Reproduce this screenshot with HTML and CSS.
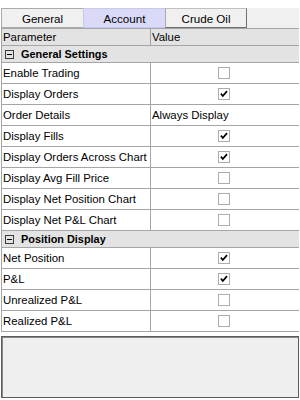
FILE: index.html
```html
<!DOCTYPE html>
<html>
<head>
<meta charset="utf-8">
<link rel="stylesheet" href="styles.css">
</head>
<body>
<div class="app">
  <div class="tabs">
    <div class="tab">General</div>
    <div class="tab active">Account</div>
    <div class="tab last">Crude Oil</div>
  </div>
  <div class="grid">
    <div class="row head"><div class="name">Parameter</div><div class="val">Value</div></div>
    <div class="row group"><span class="minus"></span><span class="gtitle">General Settings</span></div>
    <div class="row"><div class="name">Enable Trading</div><div class="val c"><span class="cb"></span></div></div>
    <div class="row"><div class="name">Display Orders</div><div class="val c"><span class="cb on"><svg viewBox="0 0 12 12"><path d="M2.3 5.6 L4.6 8.4 L9.6 2.6" /></svg></span></div></div>
    <div class="row"><div class="name">Order Details</div><div class="val">Always Display</div></div>
    <div class="row"><div class="name">Display Fills</div><div class="val c"><span class="cb on"><svg viewBox="0 0 12 12"><path d="M2.3 5.6 L4.6 8.4 L9.6 2.6" /></svg></span></div></div>
    <div class="row"><div class="name">Display Orders Across Chart</div><div class="val c"><span class="cb on"><svg viewBox="0 0 12 12"><path d="M2.3 5.6 L4.6 8.4 L9.6 2.6" /></svg></span></div></div>
    <div class="row"><div class="name">Display Avg Fill Price</div><div class="val c"><span class="cb"></span></div></div>
    <div class="row"><div class="name">Display Net Position Chart</div><div class="val c"><span class="cb"></span></div></div>
    <div class="row"><div class="name">Display Net P&amp;L Chart</div><div class="val c"><span class="cb"></span></div></div>
    <div class="row group"><span class="minus"></span><span class="gtitle">Position Display</span></div>
    <div class="row"><div class="name">Net Position</div><div class="val c"><span class="cb on"><svg viewBox="0 0 12 12"><path d="M2.3 5.6 L4.6 8.4 L9.6 2.6" /></svg></span></div></div>
    <div class="row"><div class="name">P&amp;L</div><div class="val c"><span class="cb on"><svg viewBox="0 0 12 12"><path d="M2.3 5.6 L4.6 8.4 L9.6 2.6" /></svg></span></div></div>
    <div class="row"><div class="name">Unrealized P&amp;L</div><div class="val c"><span class="cb"></span></div></div>
    <div class="row"><div class="name">Realized P&amp;L</div><div class="val c"><span class="cb"></span></div></div>
  </div>
  <div class="panel"></div>
</div>
</body>
</html>
```
FILE: styles.css
```css
html, body {
  margin: 0;
  padding: 0;
  background: #ffffff;
}
body {
  font-family: "Liberation Sans", Arial, sans-serif;
  font-size: 11.4px;
  color: #000;
}
.app {
  width: 298px;
  margin-left: 1px;
}
.tabs {
  margin-top: 8px;
  height: 20px;
  background: #f0f0f0;
  display: flex;
}
.tab {
  box-sizing: border-box;
  width: 82px;
  height: 20px;
  border: 1px solid #ababab;
  border-right: none;
  background: #f0f0f0;
  display: flex;
  align-items: center;
  justify-content: center;
  font-size: 11.6px;
}
.tab.active {
  background: #dadaf8;
  border-color: #c8c8ea;
}
.tab.last {
  border: 1px solid #707070;
  border-top-color: #c0c0c0;
  border-left-color: #ababab;
}
.grid {
  border-top: 1px solid #a5a5a5;
  border-left: 1px solid #a5a5a5;
}
.row {
  display: flex;
  height: 20px;
  border-bottom: 1px solid #a5a5a5;
  background: #fff;
  box-sizing: content-box;
}
.name {
  width: 149px;
  border-right: 1px solid #a5a5a5;
  padding-left: 1px;
  box-sizing: border-box;
  display: flex;
  align-items: center;
  white-space: nowrap;
  overflow: hidden;
}
.val {
  flex: 1;
  display: flex;
  align-items: center;
  padding-left: 1px;
  white-space: nowrap;
}
.val.c {
  justify-content: center;
  padding-left: 0;
  padding-right: 2px;
}
.row.head {
  height: 16px;
  background: #e3e3e3;
}
.row.group {
  height: 16px;
  background: #e3e3e3;
  align-items: center;
}
.minus {
  position: relative;
  box-sizing: border-box;
  width: 9px;
  height: 9px;
  border: 1px solid #3c3c3c;
  margin-left: 3px;
  margin-right: 7px;
}
.minus::after {
  content: "";
  position: absolute;
  left: 1px;
  top: 3px;
  width: 5px;
  height: 1px;
  background: #000;
}
.gtitle {
  font-weight: bold;
  font-size: 10.9px;
}
.cb {
  box-sizing: border-box;
  width: 12px;
  height: 12px;
  border: 1px solid #adadad;
  background: #fff;
  display: block;
}
.cb svg {
  display: block;
  width: 10px;
  height: 10px;
}
.cb svg path {
  fill: none;
  stroke: #000;
  stroke-width: 2.1;
}
.panel {
  margin-top: 4px;
  height: 60px;
  border: 1px solid #5a5a5a;
  box-shadow: inset 1px 1px 0 #8a8a8a;
  background: #efefef;
}
```
